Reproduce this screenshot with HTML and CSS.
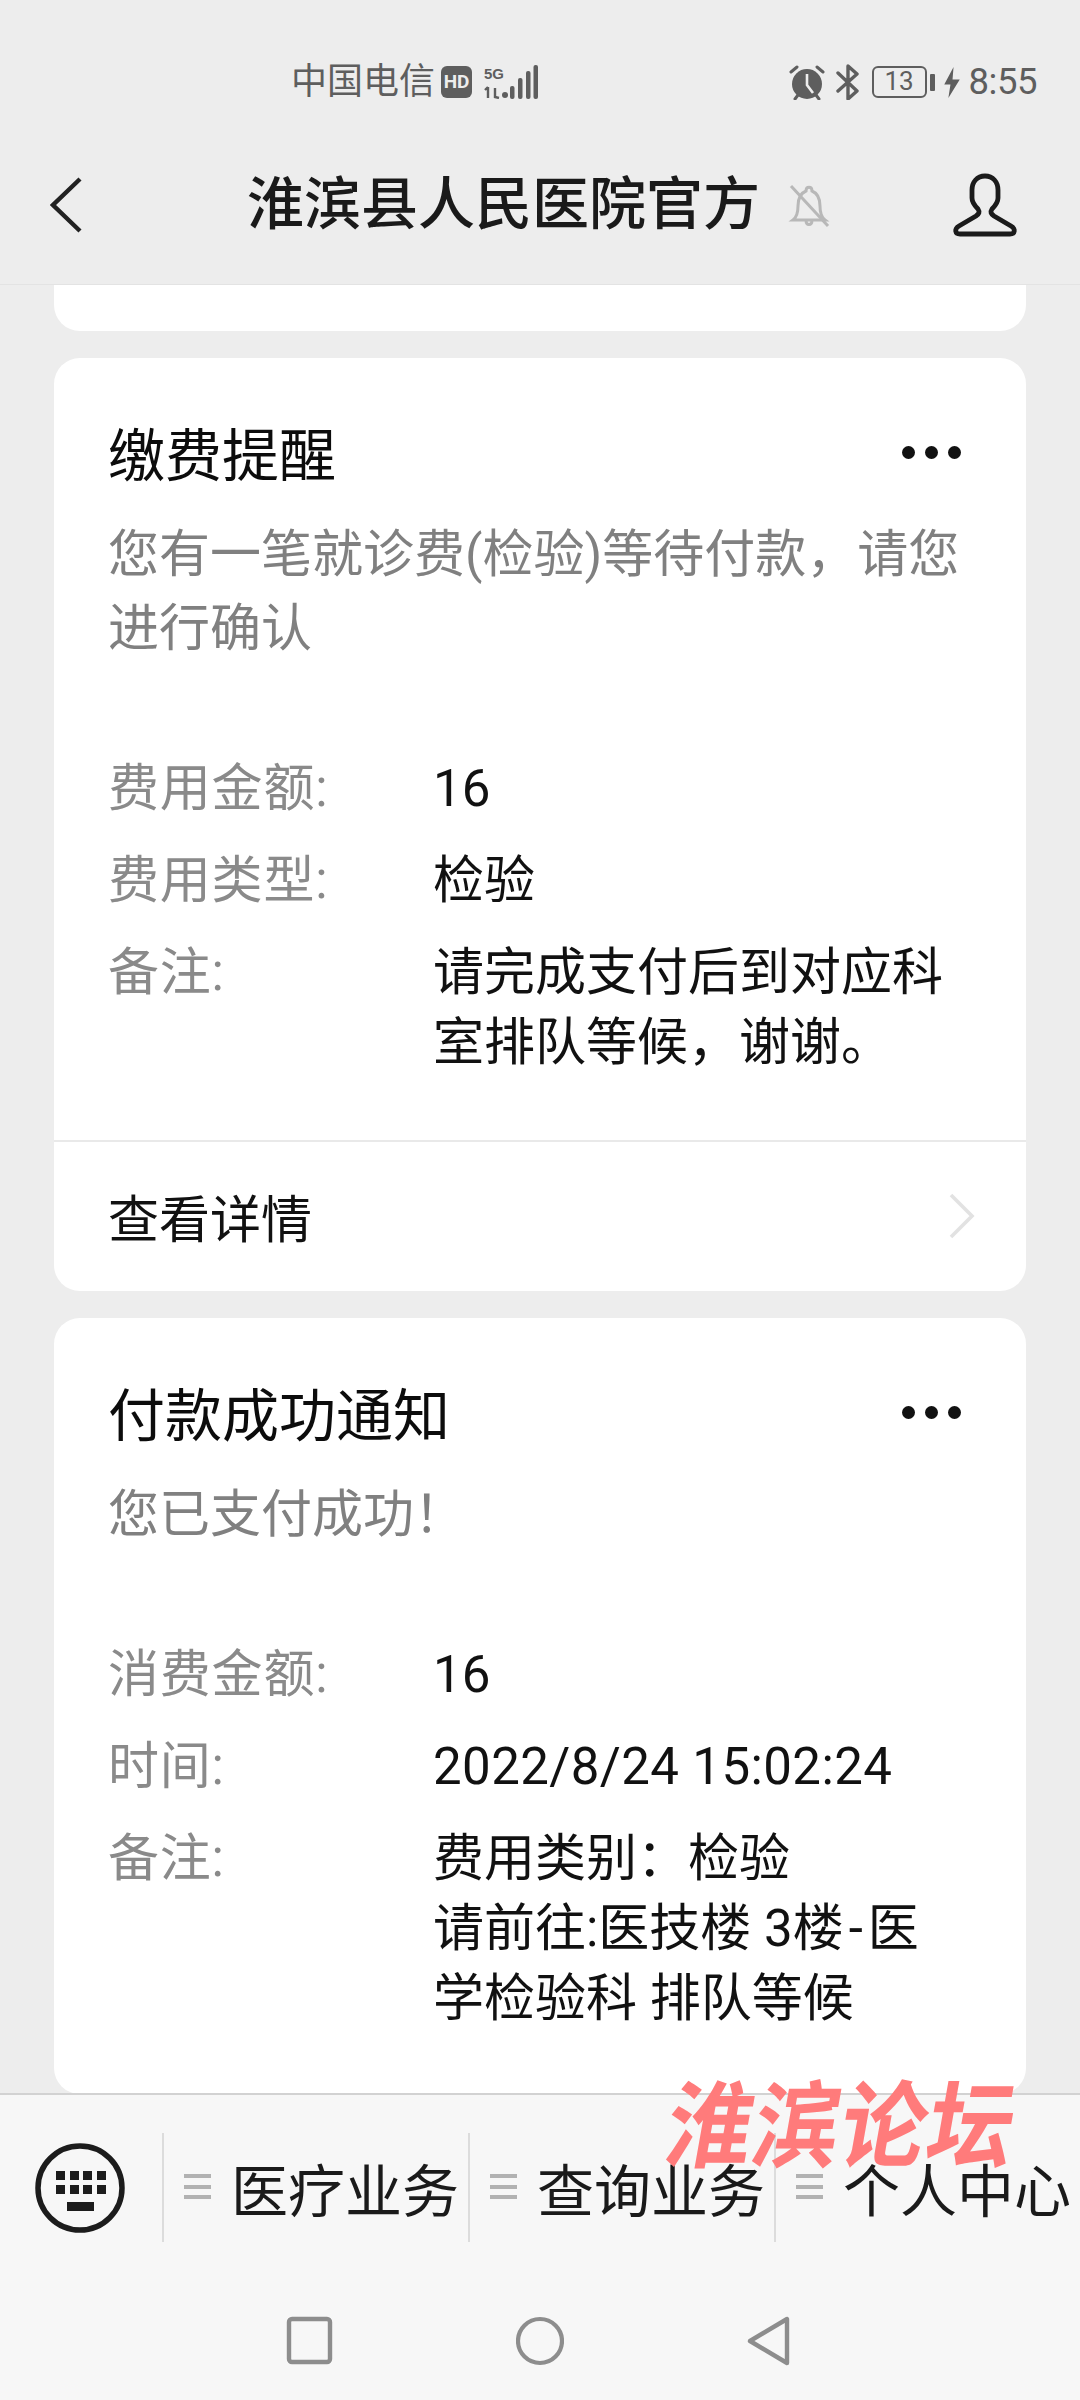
FILE: index.html
```html
<!DOCTYPE html>
<html lang="zh-CN">
<head>
<meta charset="utf-8" />
<title>淮滨县人民医院官方</title>
<link rel="stylesheet" href="styles.css">
</head>
<body>
<div id="page">
    <div class="status">
        <span class="carrier">中国电信</span>
        <span class="hd">HD</span>
        <svg class="signal" width="54" height="34" viewBox="0 0 54 34">
            <text x="0" y="14" class="signal-5g">5G</text>
            <path d="M4 22v11M1 25l3-3M11 23v9l4 1" fill="none" stroke="#5e5e5e" stroke-width="2.4"/>
            <circle cx="21" cy="30" r="3" fill="#5e5e5e"/>
            <rect x="26" y="21" width="4.5" height="13" rx="2" fill="#5e5e5e"/>
            <rect x="34" y="13" width="4.5" height="21" rx="2" fill="#5e5e5e"/>
            <rect x="42" y="6" width="4.5" height="28" rx="2" fill="#5e5e5e"/>
            <rect x="49.5" y="0" width="4.5" height="34" rx="2" fill="#5e5e5e"/>
        </svg>
        <div class="status-right">
            <svg class="alarm" width="36" height="36" viewBox="0 0 36 36">
                <circle cx="18" cy="20" r="15" fill="#5e5e5e"/>
                <path d="M18 10v11l6 8" fill="none" stroke="#ededed" stroke-width="2.6"/>
                <path d="M2 8l6-5M34 8l-6-5M6 35l3-4M30 35l-3-4" fill="none" stroke="#5e5e5e" stroke-width="3" stroke-linecap="round"/>
            </svg>
            <svg class="bt" width="24" height="36" viewBox="0 0 24 36">
                <path d="M2 9l19 18-9 8V2l9 8L2 27" fill="none" stroke="#5e5e5e" stroke-width="3.4" stroke-linejoin="round" stroke-linecap="round"/>
            </svg>
            <span class="battery">13</span>
            <span class="battery-nub"></span>
            <svg class="bolt" width="16" height="31" viewBox="0 0 15 30">
                <path d="M9 0L0 17h6l-2 13 11-18H8z" fill="#5e5e5e"/>
            </svg>
            <span class="clock">8:55</span>
        </div>
    </div>

    <div class="nav">
        <svg class="back" width="32" height="56" viewBox="0 0 32 56">
            <path d="M30 2L3 28l27 26" fill="none" stroke="#222" stroke-width="4.4"/>
        </svg>
        <span class="nav-title">淮滨县人民医院官方</span>
        <svg class="bell" width="42" height="46" viewBox="0 0 42 46">
            <path d="M5 38c4-3 5-7 5-14 0-8 3-13 8-15 0-5 6-5 6 0 5 2 8 7 8 15 0 7 1 11 5 14zM18 38c0 6 6 6 6 0" fill="none" stroke="#b8b8b8" stroke-width="3"/>
            <path d="M3 4l37 40" stroke="#b8b8b8" stroke-width="3"/>
        </svg>
        <svg class="person" width="66" height="64" viewBox="0 0 66 64">
            <path d="M33 3c-8 0-13 6-13 14v8c0 5 3 8 6 11 2 3 1 5-2 7L7 53c-5 3-4 8 1 8h50c5 0 6-5 1-8L42 43c-3-2-4-4-2-7 3-3 6-6 6-11v-8c0-8-5-14-13-14z" fill="none" stroke="#1b1b1b" stroke-width="4.8"/>
        </svg>
    </div>

    <div class="list">
        <div class="card card-tail"></div>

        <div class="card">
            <div class="card-head">
                <span class="card-title">缴费提醒</span>
                <span class="dots"><i></i><i></i><i></i></span>
            </div>
            <p class="desc">您有一笔就诊费(检验)等待付款&#65292;请您进行确认</p>
            <dl class="rows">
                <div class="row"><dt>费用金额:</dt><dd>16</dd></div>
                <div class="row"><dt>费用类型:</dt><dd>检验</dd></div>
                <div class="row"><dt>备注:</dt><dd>请完成支付后到对应科室排队等候&#65292;谢谢。</dd></div>
            </dl>
            <div class="more">
                <span>查看详情</span>
                <svg width="26" height="46" viewBox="0 0 26 46">
                    <path d="M2 2l21 21L2 44" fill="none" stroke="#e2e2e2" stroke-width="3.6"/>
                </svg>
            </div>
        </div>

        <div class="card card-cut">
            <div class="card-head">
                <span class="card-title">付款成功通知</span>
                <span class="dots"><i></i><i></i><i></i></span>
            </div>
            <p class="desc">您已支付成功&#65281;</p>
            <dl class="rows">
                <div class="row"><dt>消费金额:</dt><dd>16</dd></div>
                <div class="row"><dt>时间:</dt><dd class="stamp">2022/8/24 15:02:24</dd></div>
                <div class="row"><dt>备注:</dt><dd>费用类别&#65306;检验<br />请前往:医技楼 3楼<span class="dash">-</span>医<br />学检验科 排队等候</dd></div>
            </dl>
        </div>
    </div>

    <div class="bottom">
        <div class="menu">
            <div class="keyboard">
                <svg width="92" height="92" viewBox="0 0 92 92">
                    <circle cx="46" cy="46" r="42" fill="none" stroke="#1c1c1c" stroke-width="5.5"/>
                    <g fill="#1c1c1c">
                        <rect x="22" y="29" width="9" height="9"/><rect x="36" y="29" width="9" height="9"/><rect x="49" y="29" width="9" height="9"/><rect x="63" y="29" width="9" height="9"/>
                        <rect x="22" y="43" width="9" height="9"/><rect x="36" y="43" width="9" height="9"/><rect x="49" y="43" width="9" height="9"/><rect x="63" y="43" width="9" height="9"/>
                        <rect x="33" y="60" width="27" height="9"/>
                    </g>
                </svg>
            </div>
            <div class="tab"><span class="burger"></span><span>医疗业务</span></div>
            <div class="tab"><span class="burger"></span><span>查询业务</span></div>
            <div class="tab"><span class="burger"></span><span>个人中心</span></div>
        </div>
        <div class="sysnav">
            <svg width="48" height="50" viewBox="0 0 48 50">
                <rect x="4" y="3" width="41" height="43" rx="3" fill="none" stroke="#8d8d8d" stroke-width="4.4"/>
            </svg>
            <svg width="48" height="50" viewBox="0 0 48 50">
                <circle cx="24" cy="25" r="22" fill="none" stroke="#8d8d8d" stroke-width="4.2"/>
            </svg>
            <svg width="48" height="50" viewBox="0 0 48 50">
                <path d="M40 3v44L3 25z" fill="none" stroke="#8d8d8d" stroke-width="4.4" stroke-linejoin="round"/>
            </svg>
        </div>
    </div>

    <div class="watermark">淮滨论坛</div>
</div>
</body>
</html>
```
FILE: styles.css
```css
html,body,p,dl,dt,dd {margin:0;padding:0;}
body {background-color:#ededed; color:#111; font-family:Roboto,"Noto Sans CJK SC",sans-serif;}
i {font-style:normal;}

#page {
    position:relative;
    width:1080px;
    height:2400px;
    overflow:hidden;
    display:flex;
    flex-direction:column;
}

/* status bar */
.status {display:flex; align-items:center; height:90px; margin-top:36px; padding:2px 43px 0 291px; box-sizing:border-box; color:#5e5e5e;}
.carrier {font-size:36px; line-height:40px;}
.hd {width:31px; height:32px; margin-left:6px; border-radius:6px; background-color:#5e5e5e; color:#ededed; font-size:19px; font-weight:700; line-height:32px; text-align:center;}
.signal {margin-left:12px;}
.signal-5g {font-family:"Liberation Sans Narrow","Liberation Sans",sans-serif; font-size:15px; font-weight:700; fill:#5e5e5e;}
.status-right {display:flex; align-items:center; margin-left:auto;}
.bt {margin-left:11px;}
.battery {width:55px; height:32px; margin-left:12px; box-sizing:border-box; border:2.6px solid #5e5e5e; border-radius:6px; font-size:26px; line-height:27px; text-align:center;}
.battery-nub {width:5px; height:17px; margin-left:3px; border-radius:1px; background-color:#5e5e5e;}
.bolt {margin-left:9px;}
.clock {margin-left:9px; font-size:36.5px; line-height:40px; letter-spacing:-.5px;}

/* title bar */
.nav {display:flex; align-items:center; height:158px; padding:0 62px 0 50px; border-bottom:1px solid #e3e3e3;}
.nav-title {margin-left:165px; font-size:57px; font-weight:500; line-height:70px; color:#1a1a1a; white-space:nowrap;}
.bell {margin-left:28px;}
.person {margin-left:auto;}

/* messages */
.list {flex:1; min-height:0; overflow:hidden; display:flex; flex-direction:column; gap:27px; padding:0 54px;}
.card {flex:none; background-color:#fff; border-radius:26px;}
.card-tail {height:46px; border-radius:0 0 26px 26px;}
.card-cut {padding-bottom:60px;}
.card-head {display:flex; align-items:center; justify-content:space-between; padding:64px 65px 0 54px;}
.card-title {font-size:57px; line-height:70px; color:#0c0c0c;}
.dots {display:flex; gap:10px; margin-top:-10px;}
.dots i {width:13px; height:13px; border-radius:50%; background-color:#111;}
.desc {margin-top:26px; padding:0 56px 0 54px; font-size:51px; line-height:74px; color:#808080;}
.rows {margin-top:88px; padding:0 56px 0 54px; display:flex; flex-direction:column; gap:22px;}
.row {display:flex; font-size:51px; line-height:70px;}
.row dt {width:325px; flex:none; letter-spacing:.8px; color:#8a8a8a;}
.row dd {flex:1; padding-right:20px; color:#111;}
.row .stamp {letter-spacing:.4px; white-space:nowrap;}
.dash {margin:0 5px;}
.more {display:flex; align-items:center; justify-content:space-between; height:151px; margin-top:62px; padding:0 51px 2px 54px; box-sizing:border-box; border-top:2px solid #e9e9e9; font-size:51px; color:#111;}

/* bottom menu */
.bottom {flex:none; height:307px; box-sizing:border-box; border-top:2px solid #d2d2d2; background-color:#f7f7f7;}
.menu {display:flex; height:109px; margin-top:38px;}
.keyboard {width:162px; flex:none; display:flex; align-items:center; padding-left:34px; box-sizing:border-box;}
.tab {width:306px; flex:none; display:flex; align-items:center; box-sizing:border-box; border-left:2px solid #dcdcdc; padding:0 0 2px 20px; font-size:57px; color:#1a1a1a; white-space:nowrap;}
.burger {width:27px; height:25px; margin-right:20px; box-sizing:border-box; border-top:4px solid #b2b2b2; border-bottom:4px solid #b2b2b2;}
.burger:after {content:""; display:block; height:4px; margin-top:6.5px; background-color:#b2b2b2;}
.sysnav {display:flex; justify-content:center; gap:183px; margin-top:74px;}

.watermark {position:absolute; left:667px; top:2078px; font-size:86px; font-weight:700; line-height:100px; letter-spacing:1px; color:#ff7b7b; white-space:nowrap; transform:skewX(-10deg) scaleY(1.1);}
```
